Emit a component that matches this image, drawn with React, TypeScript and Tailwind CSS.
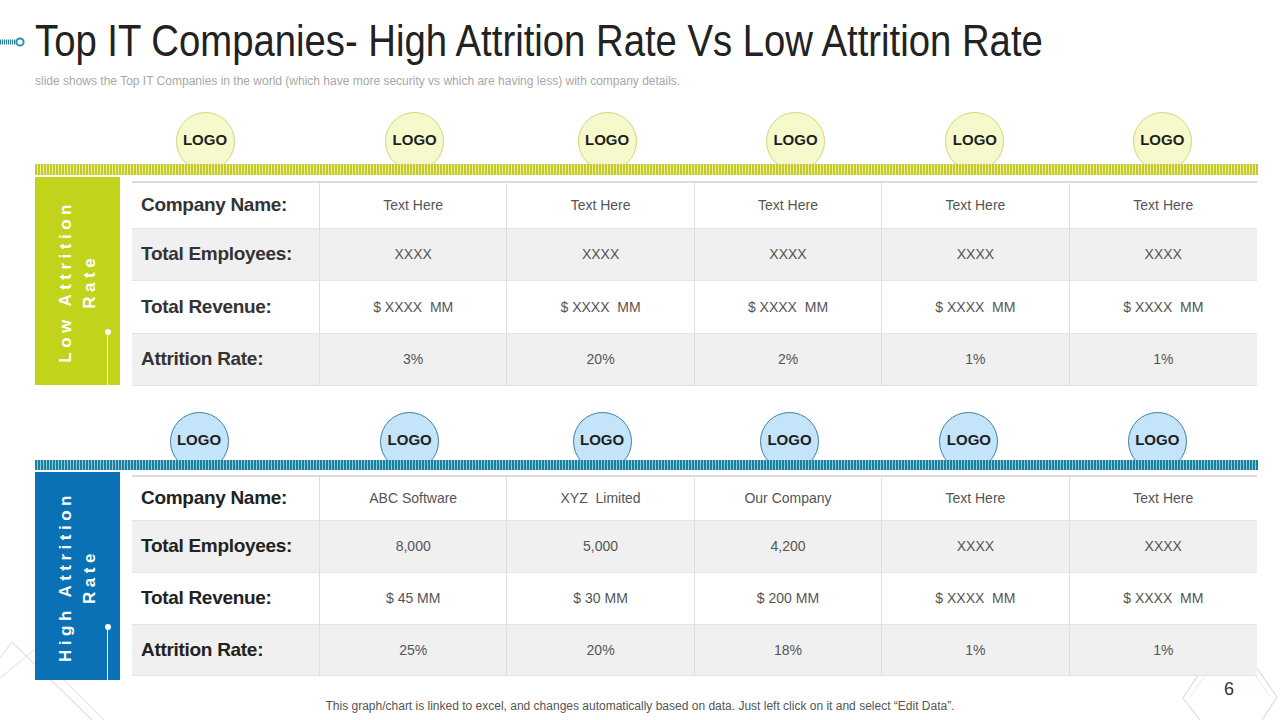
import React from "react";

type Section = {
  title: [string, string];
  tone: "green" | "blue";
  logoShift: string[];
  rows: { label: string; values: string[] }[];
};

const sections: Section[] = [
  {
    title: ["Low Attrition", "Rate"],
    tone: "green",
    logoShift: ["-ml-[42px]", "ml-[2px]", "ml-[12px]", "ml-[14px]", "-ml-[2px]", "-ml-[2px]"],
    rows: [
      { label: "Company Name:", values: ["Text Here", "Text Here", "Text Here", "Text Here", "Text Here"] },
      { label: "Total Employees:", values: ["XXXX", "XXXX", "XXXX", "XXXX", "XXXX"] },
      { label: "Total Revenue:", values: ["$ XXXX  MM", "$ XXXX  MM", "$ XXXX  MM", "$ XXXX  MM", "$ XXXX  MM"] },
      { label: "Attrition Rate:", values: ["3%", "20%", "2%", "1%", "1%"] },
    ],
  },
  {
    title: ["High Attrition", "Rate"],
    tone: "blue",
    logoShift: ["-ml-[54px]", "-ml-[8px]", "ml-[2px]", "ml-[2px]", "-ml-[14px]", "-ml-[12px]"],
    rows: [
      { label: "Company Name:", values: ["ABC Software", "XYZ  Limited", "Our Company", "Text Here", "Text Here"] },
      { label: "Total Employees:", values: ["8,000", "5,000", "4,200", "XXXX", "XXXX"] },
      { label: "Total Revenue:", values: ["$ 45 MM", "$ 30 MM", "$ 200 MM", "$ XXXX  MM", "$ XXXX  MM"] },
      { label: "Attrition Rate:", values: ["25%", "20%", "18%", "1%", "1%"] },
    ],
  },
];

function Logo({ tone, shift }: { tone: "green" | "blue"; shift: string }) {
  const look =
    tone === "green"
      ? "bg-[#f6f9cc] border-[#cfd77a]"
      : "bg-[#c4e4fa] border-[#3f7fa6]";
  return (
    <div className="flex justify-center">
      <div
        className={`${shift} ${look} w-[59px] h-[59px] shrink-0 rounded-full border flex items-center justify-center pb-[2px] text-[15px] font-bold text-[#1f1f1f]`}
      >
        LOGO
      </div>
    </div>
  );
}

function Block({ s, first }: { s: Section; first: boolean }) {
  const green = s.tone === "green";
  const rowH = first
    ? ["h-[45px]", "h-[52px]", "h-[53px]", "h-[52px]"]
    : ["h-[43px]", "h-[52px]", "h-[52px]", "h-[51px]"];
  return (
    <div className="flex flex-col">
      {/* logos sit half behind the striped band */}
      <div className={`${first ? "h-[52px]" : "h-[48px]"} pl-[132px] pr-[23px] grid grid-cols-[188px_repeat(5,1fr)] items-start`}>
        {s.logoShift.map((sh, i) => (
          <Logo key={i} tone={s.tone} shift={sh} />
        ))}
      </div>
      <div
        className={`relative z-10 ml-[35px] mr-[22px] border-b-2 border-white ${first ? "h-[13px]" : "h-[12px]"} ${
          green
            ? "bg-[repeating-linear-gradient(90deg,#c3cb2c_0px,#c3cb2c_2px,#e9ec9e_2px,#e9ec9e_3px)]"
            : "bg-[repeating-linear-gradient(90deg,#1b7f9e_0px,#1b7f9e_2px,#93c9d8_2px,#93c9d8_3px)]"
        }`}
      />
      <div className="flex items-start ml-[35px] mr-[23px]">
        <div
          className={`relative w-[85px] h-[208px] shrink-0 flex items-center justify-center ${
            green ? "bg-[#c2d31c]" : "bg-[#0a71b6]"
          }`}
        >
          <div className="[writing-mode:vertical-rl] rotate-180 text-white font-bold text-[17px] leading-[24px] tracking-[4.5px] text-center">
            <div>{s.title[0]}</div>
            <div>{s.title[1]}</div>
          </div>
          <div className="absolute left-[70px] top-[152px] w-[6px] h-[6px] rounded-full bg-white" />
          <div className="absolute left-[72px] top-[156px] bottom-0 w-px bg-white" />
        </div>
        <div
          className={`${first ? "mt-[4px]" : "mt-[3px]"} ml-[12px] flex-1 grid grid-cols-[188px_repeat(5,1fr)] border-t-2 border-[#dcdcdc] border-b border-b-[#e2e2e2] bg-white`}
        >
          {s.rows.map((r, ri) => {
            const bg = ri % 2 === 1 ? "bg-[#f0f0f0]" : "bg-white";
            const line = ri === 0 ? "" : "border-t border-[#e4e4e4]";
            return (
              <React.Fragment key={r.label}>
                <div
                  className={`${rowH[ri]} ${bg} ${line} border-r border-r-[#dedede] flex items-center pl-[9px] text-[19px] font-bold tracking-[-0.3px] ${
                    green ? "text-[#333333]" : "text-[#222222]"
                  }`}
                >
                  {r.label}
                </div>
                {r.values.map((v, vi) => (
                  <div
                    key={vi}
                    className={`${rowH[ri]} ${bg} ${line} ${
                      vi < 4 ? "border-r border-r-[#dedede]" : ""
                    } flex items-center justify-center text-[14px] text-[#555555] whitespace-pre`}
                  >
                    {v}
                  </div>
                ))}
              </React.Fragment>
            );
          })}
        </div>
      </div>
    </div>
  );
}

export default function App() {
  return (
    <div className="relative w-[1280px] h-[720px] overflow-hidden bg-white font-['Liberation_Sans',Arial,sans-serif]">
      {/* background diamonds */}
      <svg className="absolute left-0 top-[630px]" width="120" height="90" viewBox="0 0 120 90" fill="none">
        <path d="M0 28 L12 12 L92 90" stroke="#e3e3e3" strokeWidth="1.2" />
        <path d="M0 48 L34 20 L104 90" stroke="#e8e8e8" strokeWidth="1.2" />
      </svg>
      <svg className="absolute left-[1170px] top-[640px]" width="110" height="80" viewBox="0 0 110 80" fill="none">
        <path d="M59 -12 L13 58 L30 80" stroke="#dedede" strokeWidth="1.2" />
        <path d="M59 -12 L107 57 L92 80" stroke="#dedede" strokeWidth="1.2" />
        <path d="M59 -2 L20 58" stroke="#e8e8e8" strokeWidth="1" />
        <path d="M59 -2 L100 57" stroke="#e8e8e8" strokeWidth="1" />
      </svg>

      <svg className="absolute left-0 top-[36px]" width="26" height="12" viewBox="0 0 26 12" fill="none">
        {[0, 2, 4, 6, 8, 10, 12, 14].map((x) => (
          <rect key={x} x={x} y="3.5" width="1.2" height="5" fill="#2e7c9c" />
        ))}
        <circle cx="20" cy="6" r="3.6" stroke="#2e8fb5" strokeWidth="2" />
      </svg>

      <div className="relative flex flex-col">
        <h1 className="pt-[19px] pl-[35px] text-[44px] leading-[44px] text-[#222222] whitespace-nowrap">
          <span className="inline-block origin-left scale-x-[0.87]">
            Top IT Companies- High Attrition Rate Vs Low Attrition Rate
          </span>
        </h1>
        <p className="mt-[11px] pl-[35px] text-[12px] leading-[14px] text-[#a8a8a8]">
          slide shows the Top IT Companies in the world (which have more security vs which are having less) with company details.
        </p>

        <div className="mt-[24px]">
          <Block s={sections[0]} first />
        </div>
        <div className="mt-[26px]">
          <Block s={sections[1]} first={false} />
        </div>

        <p className="mt-[19px] text-center text-[12px] leading-[14px] text-[#555555]">
          This graph/chart is linked to excel,  and changes automatically based on data. Just left click on it and select “Edit Data”.
        </p>
      </div>

      <div className="absolute left-[1224px] top-[676px] text-[18px] text-[#333333]">
        6
      </div>
    </div>
  );
}
